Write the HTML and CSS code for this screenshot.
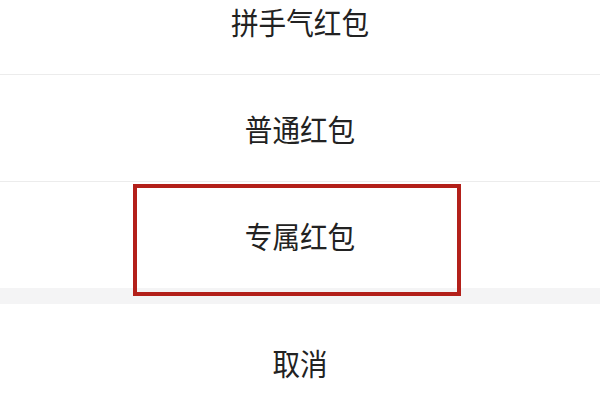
FILE: index.html
```html
<!DOCTYPE html>
<html lang="zh-CN">
<head>
    <meta charset="UTF-8">
    <meta name="viewport" content="width=device-width, initial-scale=1.0">
    <title>红包类型</title>
    <link rel="stylesheet" href="styles.css">
</head>
<body>
    <div class="sheet">
        <div class="item"><span class="label">拼手气红包</span></div>
        <div class="item"><span class="label">普通红包</span></div>
        <div class="item item-marked">
            <span class="label">专属红包</span>
            <div class="mark"></div>
        </div>
        <div class="gap"></div>
        <div class="item item-cancel"><span class="label">取消</span></div>
    </div>
</body>
</html>
```

FILE: styles.css
```css
body {
    margin: 0;
    background: #ffffff;
    font-family: "Noto Sans CJK SC", "Noto Sans", sans-serif;
    color: #222222;
    overflow: hidden;
}

.sheet {
    margin-top: -32px;
}

.item {
    height: 106px;
    display: flex;
    align-items: center;
    justify-content: center;
    border-bottom: 1px solid #ececec;
}

.label {
    display: inline-block;
    font-size: 30px;
    transform: scaleX(0.92);
}

.item-marked {
    position: relative;
    border-bottom: none;
}

.mark {
    position: absolute;
    left: 133px;
    top: 2px;
    width: 328px;
    height: 112px;
    box-sizing: border-box;
    border: 4px solid #b3201a;
    z-index: 1;
}

.gap {
    height: 16px;
    background: #f4f4f5;
}

.item-cancel {
    border-bottom: none;
    padding-top: 5px;
}
```
